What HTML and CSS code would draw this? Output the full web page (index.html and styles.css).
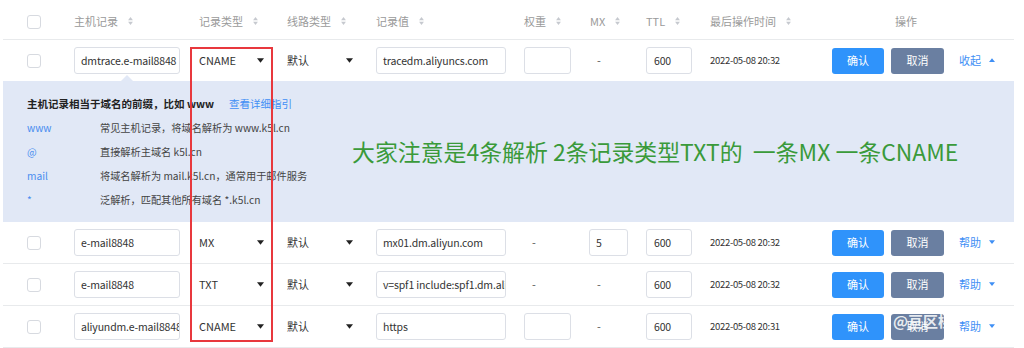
FILE: index.html
```html
<!DOCTYPE html>
<html lang="zh-CN">
<head>
<meta charset="utf-8">
<title>解析设置</title>
<link rel="stylesheet" href="styles.css">
</head>
<body>
<div class="table">
  <div class="row head">
    <div class="cell"><span class="checkbox"></span></div>
    <div class="cell">主机记录<svg class="sort" viewBox="0 0 6 10"><path d="M3 0L6 4H0z"/><path d="M3 10L6 6H0z"/></svg></div>
    <div class="cell pad9">记录类型<svg class="sort" viewBox="0 0 6 10"><path d="M3 0L6 4H0z"/><path d="M3 10L6 6H0z"/></svg></div>
    <div class="cell">线路类型<svg class="sort" viewBox="0 0 6 10"><path d="M3 0L6 4H0z"/><path d="M3 10L6 6H0z"/></svg></div>
    <div class="cell">记录值<svg class="sort" viewBox="0 0 6 10"><path d="M3 0L6 4H0z"/><path d="M3 10L6 6H0z"/></svg></div>
    <div class="cell">权重<svg class="sort" viewBox="0 0 6 10"><path d="M3 0L6 4H0z"/><path d="M3 10L6 6H0z"/></svg></div>
    <div class="cell pad1">MX<svg class="sort" viewBox="0 0 6 10"><path d="M3 0L6 4H0z"/><path d="M3 10L6 6H0z"/></svg></div>
    <div class="cell">TTL<svg class="sort" viewBox="0 0 6 10"><path d="M3 0L6 4H0z"/><path d="M3 10L6 6H0z"/></svg></div>
    <div class="cell">最后操作时间<svg class="sort" viewBox="0 0 6 10"><path d="M3 0L6 4H0z"/><path d="M3 10L6 6H0z"/></svg></div>
    <div class="cell ops-head">操作</div>
  </div>

  <div class="row open">
    <div class="cell"><span class="checkbox"></span></div>
    <div class="cell"><span class="input w-host">dmtrace.e-mail8848</span></div>
    <div class="cell"><span class="select type">CNAME<svg class="caret" viewBox="0 0 8 5"><path d="M0 0H8L4 5z"/></svg></span></div>
    <div class="cell"><span class="select line">默认<svg class="caret" viewBox="0 0 8 5"><path d="M0 0H8L4 5z"/></svg></span></div>
    <div class="cell"><span class="input w-val">tracedm.aliyuncs.com</span></div>
    <div class="cell"><span class="input w-weight"></span></div>
    <div class="cell"><span class="dash">-</span></div>
    <div class="cell"><span class="input w-ttl">600</span></div>
    <div class="cell time">2022-05-08 20:32</div>
    <div class="cell ops"><span class="btn ok">确认</span><span class="btn cancel">取消</span><span class="link">收起<svg class="caret blue" viewBox="0 0 8 5"><path d="M0 5H8L4 0z"/></svg></span></div>
  </div>

  <div class="panel">
    <div class="help">
      <div class="help-title"><b>主机记录相当于域名的前缀，比如 www</b><span class="link-text">查看详细指引</span></div>
      <div class="help-row"><span class="key">www</span><span>常见主机记录，将域名解析为 www.k5l.cn</span></div>
      <div class="help-row"><span class="key">@</span><span>直接解析主域名 k5l.cn</span></div>
      <div class="help-row"><span class="key">mail</span><span>将域名解析为 mail.k5l.cn，通常用于邮件服务</span></div>
      <div class="help-row"><span class="key">*</span><span>泛解析，匹配其他所有域名 *.k5l.cn</span></div>
    </div>
    <div class="note">大家注意是4条解析 2条记录类型TXT的&nbsp; 一条MX 一条CNAME</div>
  </div>

  <div class="row">
    <div class="cell"><span class="checkbox"></span></div>
    <div class="cell"><span class="input w-host">e-mail8848</span></div>
    <div class="cell"><span class="select type">MX<svg class="caret" viewBox="0 0 8 5"><path d="M0 0H8L4 5z"/></svg></span></div>
    <div class="cell"><span class="select line">默认<svg class="caret" viewBox="0 0 8 5"><path d="M0 0H8L4 5z"/></svg></span></div>
    <div class="cell"><span class="input w-val">mx01.dm.aliyun.com</span></div>
    <div class="cell"><span class="dash">-</span></div>
    <div class="cell"><span class="input w-mx">5</span></div>
    <div class="cell"><span class="input w-ttl">600</span></div>
    <div class="cell time">2022-05-08 20:32</div>
    <div class="cell ops"><span class="btn ok">确认</span><span class="btn cancel">取消</span><span class="link">帮助<svg class="caret blue" viewBox="0 0 8 5"><path d="M0 0H8L4 5z"/></svg></span></div>
  </div>

  <div class="row">
    <div class="cell"><span class="checkbox"></span></div>
    <div class="cell"><span class="input w-host">e-mail8848</span></div>
    <div class="cell"><span class="select type">TXT<svg class="caret" viewBox="0 0 8 5"><path d="M0 0H8L4 5z"/></svg></span></div>
    <div class="cell"><span class="select line">默认<svg class="caret" viewBox="0 0 8 5"><path d="M0 0H8L4 5z"/></svg></span></div>
    <div class="cell"><span class="input w-val">v=spf1 include:spf1.dm.aliyun.com -all</span></div>
    <div class="cell"><span class="dash">-</span></div>
    <div class="cell"><span class="dash">-</span></div>
    <div class="cell"><span class="input w-ttl">600</span></div>
    <div class="cell time">2022-05-08 20:32</div>
    <div class="cell ops"><span class="btn ok">确认</span><span class="btn cancel">取消</span><span class="link">帮助<svg class="caret blue" viewBox="0 0 8 5"><path d="M0 0H8L4 5z"/></svg></span></div>
  </div>

  <div class="row">
    <div class="cell"><span class="checkbox"></span></div>
    <div class="cell"><span class="input w-host">aliyundm.e-mail8848</span></div>
    <div class="cell"><span class="select type">CNAME<svg class="caret" viewBox="0 0 8 5"><path d="M0 0H8L4 5z"/></svg></span></div>
    <div class="cell"><span class="select line">默认<svg class="caret" viewBox="0 0 8 5"><path d="M0 0H8L4 5z"/></svg></span></div>
    <div class="cell"><span class="input w-val">https</span></div>
    <div class="cell"><span class="input w-weight"></span></div>
    <div class="cell"><span class="dash">-</span></div>
    <div class="cell"><span class="input w-ttl">600</span></div>
    <div class="cell time">2022-05-08 20:31</div>
    <div class="cell ops"><span class="btn ok">确认</span><span class="btn cancel">取消<span class="watermark">@亘区桃</span></span><span class="link">帮助<svg class="caret blue" viewBox="0 0 8 5"><path d="M0 0H8L4 5z"/></svg></span></div>
  </div>

  <div class="redbox"></div>
</div>
</body>
</html>
```

FILE: styles.css
```css
* { box-sizing: border-box; }
html, body { margin: 0; padding: 0; background: #fff; }
body {
  font-family: "Noto Sans CJK SC", sans-serif;
  font-size: 11px;
  line-height: 1.3;
  color: #333;
  overflow: hidden;
  height: 348px;
}
.table {
  position: relative;
  margin-left: 3px;
  width: 1011px;
}
.row {
  display: grid;
  grid-template-columns: 71px 116px 97px 89px 148px 65px 57px 64px 122px 1fr;
  align-items: center;
  height: 42px;
  border-bottom: 1px solid #e8eaec;
}
.row.head {
  height: 40px;
  padding-top: 4px;
  color: #9a9a9a;
}
.row.open { height: 41px; border-bottom: none; }
.cell {
  display: flex;
  align-items: center;
  white-space: nowrap;
  min-width: 0;
}
.cell:first-child { padding-left: 24px; }
.pad9 { padding-left: 9px; }
.pad1 { padding-left: 1px; }
.ops-head { padding-left: 63px; }
.sort { width: 5px; height: 8px; margin-left: 10px; fill: #c6c9cf; }
.checkbox {
  display: block;
  width: 14px;
  height: 14px;
  border: 1px solid #d7dae0;
  border-radius: 3px;
  background: #fff;
}
.input {
  display: block;
  height: 27px;
  line-height: 25px;
  border: 1px solid #dcdfe6;
  border-radius: 3px;
  background: #fff;
  padding-left: 6px;
  overflow: hidden;
  white-space: nowrap;
  color: #333;
  font-size: 10.5px;
  letter-spacing: -0.15px;
}
.w-host { width: 106px; }
.w-val { width: 130px; }
.w-weight { width: 47px; }
.w-mx { width: 39px; }
.w-ttl { width: 46px; padding-left: 7px; }
.select {
  display: flex;
  align-items: center;
  justify-content: space-between;
  height: 27px;
}
.select.type { width: 83px; padding: 0 9px 0 9px; }
.select.line { width: 66px; }
.caret { width: 7px; height: 5px; fill: #222; }
.caret.blue { fill: #3f8ff5; margin-left: 8px; width: 6px; height: 4px; }
.dash { padding-left: 8px; color: #555; }
.time { color: #333; font-size: 9.5px; letter-spacing: -0.3px; }
.ops { position: relative; }
.btn {
  position: relative;
  display: flex;
  align-items: center;
  justify-content: center;
  height: 26px;
  border-radius: 3px;
  color: #fff;
  overflow: hidden;
}
.btn.ok { width: 52px; background: #2f93fb; }
.btn.cancel { width: 53px; margin-left: 7px; background: #6a7fa1; }
.link {
  display: flex;
  align-items: center;
  margin-left: 15px;
  color: #3f8ff5;
}
.watermark {
  position: absolute;
  left: 2px;
  top: -3px;
  font-size: 15px;
  font-weight: bold;
  color: rgba(255,255,255,0.85);
  white-space: nowrap;
}
.panel {
  position: relative;
  display: flex;
  align-items: center;
  height: 141px;
  background: #e1e8f6;
  padding-left: 24px;
}
.panel::before {
  content: "";
  position: absolute;
  left: 118px;
  top: -6px;
  border-left: 6px solid transparent;
  border-right: 6px solid transparent;
  border-bottom: 6px solid #e1e8f6;
}
.help { width: 325px; }
.help-title {
  display: flex;
  align-items: center;
  height: 24px;
  color: #222;
  font-size: 10.5px;
}
.help-title b { font-weight: bold; }
.link-text { margin-left: 15px; color: #3f8ff5; }
.help-row {
  display: flex;
  align-items: center;
  height: 24px;
  color: #444;
  font-size: 10.2px;
}
.key { width: 73px; color: #4a8ef0; }
.note {
  font-size: 22.9px;
  color: #3a9a3a;
  white-space: pre;
}
.redbox {
  position: absolute;
  left: 187px;
  top: 47px;
  width: 83px;
  height: 295px;
  border: 2px solid #e8383d;
  pointer-events: none;
}
```
